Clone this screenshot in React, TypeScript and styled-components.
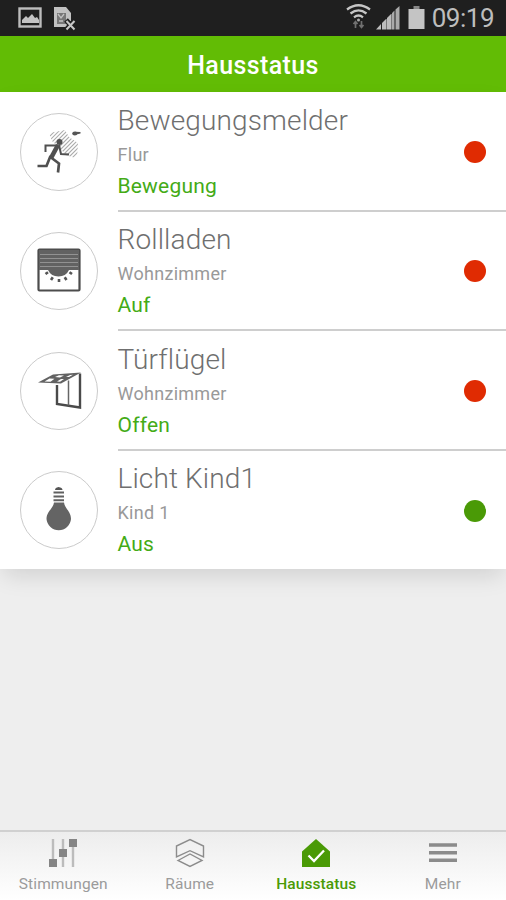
import React from 'react';
import styled, { createGlobalStyle } from 'styled-components';

const GlobalStyle = createGlobalStyle`
  *, *::before, *::after { box-sizing: border-box; }
  html, body, #root { height: 100%; }
  body { margin: 0; background: #eeeeee; font-family: Roboto, "Liberation Sans", sans-serif; }
  svg { display: block; overflow: visible; }
`;

const Screen = styled.div`
  display: flex;
  flex-direction: column;
  width: 506px;
  height: 900px;
  overflow: hidden;
  background: #eeeeee;
`;

const StatusBar = styled.header`
  display: flex;
  align-items: center;
  height: 36px;
  padding-right: 12px;
  flex: none;
  background: #1f1f1f;
`;

const Clock = styled.time`
  margin-left: 7px;
  font-size: 26px;
  line-height: 36px;
  letter-spacing: -0.5px;
  color: #bdbdbd;
`;

const Spacer = styled.div`
  flex: 1;
`;

const TitleBar = styled.h1`
  margin: 0;
  height: 56px;
  flex: none;
  background: #62bc05;
  color: #fff;
  font-size: 25px;
  font-weight: 500;
  line-height: 59px;
  letter-spacing: 0.4px;
  text-align: center;
`;

const List = styled.ul`
  margin: 0;
  padding: 0;
  list-style: none;
  flex: none;
  background: #fff;
  box-shadow: 0 10px 22px -4px rgba(0, 0, 0, 0.13);
`;

const Row = styled.li`
  display: flex;
  height: 119.5px;
  padding-left: 20px;
  &:last-child { height: 118.5px; }
`;

const IconCircle = styled.div`
  width: 78px;
  height: 78px;
  margin-top: 20.5px;
  flex: none;
  border: 1.5px solid #cbcbcb;
  border-radius: 50%;
  svg { margin: -1px; }
`;

const RowBody = styled.div`
  display: flex;
  flex: 1;
  margin-left: 19.5px;
  padding-right: 20px;
  align-items: center;
  justify-content: space-between;
  border-bottom: 2px solid #cecece;
  ${Row}:last-child & { border-bottom: 0; }
`;

const Labels = styled.div`
  display: flex;
  flex-direction: column;
  align-self: flex-start;
  padding-top: 10.5px;
`;

const Name = styled.span`
  height: 35px;
  line-height: 35px;
  font-size: 28px;
  font-weight: 300;
  letter-spacing: 0.14px;
  color: #6f6f6f;
  white-space: nowrap;
`;

const Room = styled.span`
  height: 32px;
  line-height: 33px;
  font-size: 18px;
  letter-spacing: 0.28px;
  color: #999;
`;

const State = styled.span`
  height: 32px;
  line-height: 32px;
  font-size: 21px;
  letter-spacing: 0.2px;
  color: #44ab16;
`;

const Dot = styled.i<{ $ok: boolean }>`
  width: 22px;
  height: 22px;
  border-radius: 50%;
  background: ${(p) => (p.$ok ? '#4a9a06' : '#e02b02')};
  margin-top: 2px;
`;

const TabBar = styled.nav`
  display: grid;
  grid-template-columns: repeat(4, 1fr);
  height: 70px;
  flex: none;
  border-top: 2px solid #d0d0d0;
  background: linear-gradient(#ededed, #fff);
`;

const Tab = styled.div<{ $active?: boolean }>`
  display: flex;
  flex-direction: column;
  align-items: center;
  padding-top: 7px;
  font-size: 15.5px;
  line-height: 20px;
  letter-spacing: ${(p) => (p.$active ? 0.1 : 0.12)}px;
  font-weight: ${(p) => (p.$active ? 500 : 400)};
  color: ${(p) => (p.$active ? '#4a9a06' : '#9b9b9b')};
  svg { margin-bottom: 7px; }
`;

const NotificationIcons = () => (
  <svg width="84" height="36" viewBox="0 0 84 36">
    <rect x="19.5" y="8.5" width="21" height="18" fill="none" stroke="#bdbdbd" strokeWidth="2.4" />
    <path d="M22 23V20l4-4 2 2 4-4 3 4 2-1 2 3v3Z" fill="#c4c4c4" />
    <path d="M54 7h12l5 6v8l-4 3v3H54Z" fill="#c2c2c2" />
    <path d="M57 13h9v11h-9Z" fill="#777" />
    <path d="M58 14l3 4 3-4M59 21h4" fill="none" stroke="#c2c2c2" strokeWidth="1.3" />
    <path d="M66 20l9 10M75 20l-9 10" stroke="#1f1f1f" strokeWidth="5" />
    <path d="M66.5 21l8 8.5M74.5 21l-8 8.5" stroke="#c8c8c8" strokeWidth="2" />
  </svg>
);

const SystemIcons = () => (
  <svg width="78" height="36" viewBox="347 0 78 36">
    <g fill="none" stroke="#c6c6c6" strokeWidth="2.3">
      <path d="M347 9.5Q358.5 1 370 9.5" />
      <path d="M350.5 13.5Q358.5 7.2 366.5 13.5" />
      <path d="M354 17.3Q358.5 13.8 363 17.3" />
    </g>
    <circle cx="358.5" cy="20" r="1.5" fill="#aaa" />
    <path d="M355.5 28V22M353.5 24l2-2.5 2 2.5M361.5 21v6M359.5 25l2 2.5 2-2.5" fill="none" stroke="#707070" strokeWidth="1.7" />
    <path d="M376 29.5L381 24v5.5ZM382 29.5V23l4-4v10.5ZM387 29.5V18l4-4v15.5Z" fill="#bcbcbc" />
    <path d="M392 29.5V13l2.5-2.5v19ZM395.5 29.5V9.5L399.5 6v23.5Z" fill="#aaa" />
    <path d="M386.5 19v10.5M391.5 14v15.5" stroke="#777" />
    <path d="M413.5 6h6v3h-6Z" fill="#888" />
    <path d="M408.5 9h16v20h-16Z" fill="#c4c4c4" />
  </svg>
);

const MotionIcon = () => (
  <svg width="78" height="78" viewBox="20 113 78 78">
    <defs>
      <clipPath id="detection-zone">
        <path d="M49 133l16-3 4 7 9 6-1 15.500-10-3L52 141Z" />
      </clipPath>
    </defs>
    <path
      d="M42 144l16-16M45 145l18-18M48 146l20-20M51 147l20-20M54 148l20-20M57 149l20-20M60 150l20-20M62 152l20-20M64 154l20-20M66 156l20-20M68 158l20-20M70 160l20-20"
      stroke="#adadad"
      strokeWidth="1.1"
      clipPath="url(#detection-zone)"
    />
    <circle cx="59.5" cy="142" r="3" fill="#505050" />
    <g fill="none" stroke="#505050" strokeWidth="2">
      <path d="M58 145.500H45.500V152M59 145l2 9 8 .5" />
      <path d="M58 145L51 158" strokeWidth="4.600" />
      <path d="M50.500 156L46.500 166H37.500M51 157.500l8 6-1 9" strokeWidth="2.700" />
    </g>
    <ellipse cx="74.800" cy="133.500" rx="2.600" ry="2" fill="#555" />
    <path d="M75 131.800L80.500 132v1.500l-4 1Z" fill="#555" />
  </svg>
);

const ShutterIcon = () => (
  <svg width="78" height="78" viewBox="20 233 78 78">
    <rect x="38.500" y="250.500" width="41" height="41" rx="1" fill="#fff" stroke="#4c4c4c" strokeWidth="2.200" />
    <path d="M39 251h40v20H39Z" fill="#626262" />
    <path d="M40 255.500h38M40 259.500h38M40 263.500h38M40 267.500h38" stroke="#929292" strokeWidth="1" />
    <path d="M48 271h21q-3 6.500-10.500 6.500T48 271Z" fill="#626262" />
    <path d="M45.500 275l2.500-1.800M51 281l1.800-2.800M59 283v-3M66.500 281l-1.800-2.800M72 275l-2.500-1.800" stroke="#555" strokeWidth="2.600" />
  </svg>
);

const WindowIcon = () => (
  <svg width="78" height="78" viewBox="20 352 78 78">
    <path d="M38 382.500L53 374.500 81 372.500 61 383.500Z" fill="#626262" />
    <path d="M44.500 381.500l5-3 5 .3-4 3ZM55 377l4-1.800 5 .2-4 2ZM57 381.500l4-2.500 3 0-4 2.800ZM66 377l4-2 3-.2-4 2.300Z" fill="#fff" />
    <path d="M57 385v19l23 3.500V373.500" fill="none" stroke="#4a4a4a" strokeWidth="2.400" />
    <path d="M68.500 380.500v25" stroke="#666" strokeWidth="1.500" />
  </svg>
);

const BulbIcon = () => (
  <svg width="78" height="78" viewBox="20 472 78 78">
    <path d="M55 491q0-2.500 3.500-3q4 .5 4 3Z" fill="#555" />
    <path d="M53.500 493.500h10.500M53.500 497.500h10.500M53.500 501.300h10.500" stroke="#606060" strokeWidth="2" />
    <path d="M54 503.500H64C65 510 71 512.500 71 520A12.300 12.300 0 0 1 46.500 520C46.500 512.500 53 510 54 503.500Z" fill="#646464" />
  </svg>
);

const MoodsIcon = () => (
  <svg width="28" height="28" viewBox="0 0 28 28">
    <path d="M4 0v28M14 0v28M24 0v28" stroke="#bcbcbc" strokeWidth="2.4" />
    <path d="M0 20h8v8H0ZM10 10h8v8h-8ZM20 0h8v8h-8Z" fill="#858585" />
  </svg>
);

const RoomsIcon = () => (
  <svg width="28" height="28" viewBox="0 0 28 28" fill="none" stroke="#8c8c8c" strokeWidth="1.4">
    <path d="M.5 18V7L14 .5 27.5 7V18L14 11.7Z" />
    <path d="M2 21.5l12-6.500 12 6.500L14 27.5Z" />
  </svg>
);

const HouseIcon = () => (
  <svg width="28" height="28" viewBox="0 0 28 28">
    <path d="M0 28V12.500L14 0 28 12.500V28Z" fill="#4a9a06" />
    <path d="M6.500 16.500l5.500 5.500L22 11.500" fill="none" stroke="#fff" strokeWidth="2.3" />
  </svg>
);

const MoreIcon = () => (
  <svg width="28" height="28" viewBox="0 0 28 28">
    <path d="M0 6h28M0 13.700h28M0 21.200h28" stroke="#8b8b8b" strokeWidth="3.600" />
  </svg>
);

const devices = [
  { name: 'Bewegungsmelder', room: 'Flur', state: 'Bewegung', ok: false, Icon: MotionIcon },
  { name: 'Rollladen', room: 'Wohnzimmer', state: 'Auf', ok: false, Icon: ShutterIcon },
  { name: 'Türflügel', room: 'Wohnzimmer', state: 'Offen', ok: false, Icon: WindowIcon },
  { name: 'Licht Kind1', room: 'Kind 1', state: 'Aus', ok: true, Icon: BulbIcon },
];

const tabs = [
  { label: 'Stimmungen', Icon: MoodsIcon },
  { label: 'Räume', Icon: RoomsIcon },
  { label: 'Hausstatus', Icon: HouseIcon, active: true },
  { label: 'Mehr', Icon: MoreIcon },
];

export default function App() {
  return (
    <>
      <GlobalStyle />
      <Screen>
        <StatusBar>
          <NotificationIcons />
          <Spacer />
          <SystemIcons />
          <Clock>09:19</Clock>
        </StatusBar>
        <TitleBar>Hausstatus</TitleBar>
        <List>
          {devices.map(({ name, room, state, ok, Icon }) => (
            <Row key={name}>
              <IconCircle><Icon /></IconCircle>
              <RowBody>
                <Labels>
                  <Name>{name}</Name>
                  <Room>{room}</Room>
                  <State>{state}</State>
                </Labels>
                <Dot $ok={ok} />
              </RowBody>
            </Row>
          ))}
        </List>
        <Spacer />
        <TabBar>
          {tabs.map(({ label, Icon, active }) => (
            <Tab key={label} $active={active}>
              <Icon />
              {label}
            </Tab>
          ))}
        </TabBar>
      </Screen>
    </>
  );
}
